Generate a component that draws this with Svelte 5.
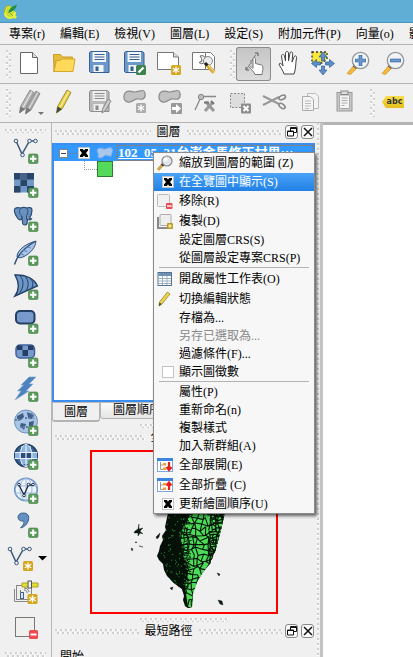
<script>
  const menus = ['專案(r)', '編輯(E)', '檢視(V)', '圖層(L)', '設定(S)', '附加元件(P)', '向量(o)', '影像(R)'];
  const fileTools = [
    ['new', '新增專案'], ['open', '開啟專案'], ['save', '儲存'], ['saveas', '另存新檔'],
    ['composer', '新增列印版面'], ['manager', '版面管理員']
  ];
  const viewTools = [
    ['touch', '觸控縮放'], ['hand', '平移'], ['pan', '平移至選取'], ['zoomin', '放大'], ['zoomout', '縮小']
  ];
  const editTools = [
    ['pencils', '目前編輯'], ['pencil', '切換編輯'], ['saveedit', '儲存編輯'], ['addshape', '新增圖徵'],
    ['moveshape', '移動圖徵'], ['node', '節點工具'], ['delsel', '刪除選取'], ['cut', '剪下'], ['copy', '複製'], ['paste', '貼上']
  ];
  const layerTools = [
    ['vector', '加入向量圖層'], ['raster', '加入網格圖層'], ['postgis', '加入 PostGIS'], ['spatialite', '加入 SpatiaLite'],
    ['mssql', '加入 MSSQL'], ['oracle', '加入 Oracle'], ['oraraster', '加入 Oracle 網格'], ['sqlany', '加入 SQL Anywhere'],
    ['wms', '加入 WMS'], ['wcs', '加入 WCS'], ['wfs', '加入 WFS'], ['csv', '加入文字圖層'],
    ['newvector', '新增圖層'], ['gps', 'GPS 工具'], ['remove', '移除圖層']
  ];
  const context = [
    { t: '縮放到圖層的範圍 (Z)', icon: 'm-zoom' },
    { t: '在全覽圖中顯示(S)', check: true, on: true, hot: true },
    { t: '移除(R)', icon: 'm-remove' },
    { t: '複製(D)', icon: 'm-copy' },
    { t: '設定圖層CRS(S)' },
    { t: '從圖層設定專案CRS(P)' },
    { sep: true },
    { t: '開啟屬性工作表(O)', icon: 'm-table' },
    { t: '切換編輯狀態', icon: 'm-pencil' },
    { t: '存檔為...' },
    { t: '另存已選取為...', off: true },
    { t: '過濾條件(F)...' },
    { t: '顯示圖徵數', check: true, on: false },
    { sep: true },
    { t: '屬性(P)' },
    { t: '重新命名(n)' },
    { t: '複製樣式' },
    { t: '加入新群組(A)' },
    { t: '全部展開(E)', icon: 'm-down' },
    { t: '全部折疊 (C)', icon: 'm-up' },
    { t: '更新繪圖順序(U)', check: true, on: true }
  ];

  // Village boundaries on the overview map: a jittered mesh of small cells.
  let seed = 17;
  const rnd = () => (seed = (seed * 16807) % 2147483647) / 2147483647;
  function mesh(x0, y0, x1, y1, step, jitter) {
    const cols = Math.ceil((x1 - x0) / step), rows = Math.ceil((y1 - y0) / step);
    const p = Array.from({ length: rows + 1 }, (_, r) => Array.from({ length: cols + 1 }, (_, c) =>
      [(x0 + c * step + (rnd() - 0.5) * jitter).toFixed(1), (y0 + r * step + (rnd() - 0.5) * jitter).toFixed(1)]));
    let d = '';
    for (let r = 0; r < rows; r++) for (let c = 0; c < cols; c++) {
      if (rnd() < 0.85) d += `M${p[r][c]}L${p[r][c + 1]}`;
      if (rnd() < 0.85) d += `M${p[r][c]}L${p[r + 1][c]}`;
    }
    return d;
  }
  const wide = mesh(172, 500, 228, 612, 5, 5);
  const fine = mesh(172, 500, 190, 590, 3, 3);
  const coast = mesh(210, 500, 228, 575, 3, 3);
  const specks = Array.from({ length: 150 }, () => [156 + rnd() * 36, 505 + rnd() * 82]);
</script>

{#snippet plus()}
  <rect x="16.500" y="21" width="9.500" height="9.500" rx="1.500" fill="#5c9a5e" stroke="#3f7d45" stroke-width=".6" />
  <path d="M21.200 22.500v6.500M18 25.800h6.500" stroke="#fff" stroke-width="2" />
{/snippet}

{#snippet star(x, y, fill)}
  <rect {x} {y} width="10" height="10" rx="1.500" {fill} />
  <path d="M{x + 5} {y + 1.5}v7M{x + 1.8} {y + 3.2}l6.400 3.600M{x + 1.8} {y + 6.8}l6.400-3.600" stroke="#fff" stroke-width="1.300" />
{/snippet}

{#snippet disk(body, edge, label)}
  <path d="M8.500 4.500h17l1.500 1.500v19.500h-18.500l-1-1V5.500z" fill={body} stroke={edge} />
  <rect x="10.500" y="5" width="13.500" height="10" fill={label} />
  <path d="M12.500 7.500h10M12.500 10h10M12.500 12.500h10" stroke={edge} />
  <rect x="11.500" y="18" width="10" height="7" fill={label} />
  <rect x="13.500" y="19.500" width="3" height="4.500" fill={edge} />
{/snippet}

{#snippet pen(x, y, body, edge, tip)}
  <g transform="translate({x} {y})">
    <path d="M11 0l4 2.500L6 19l-5.500 4 1-6.500z" fill={body} stroke={edge} stroke-width=".8" />
    <path d="M12.800 1.500L4 17.500" stroke="#fff" stroke-opacity=".6" stroke-width="1.200" />
    <path d="M1.500 16.500L6 19 .5 23z" fill={tip} />
  </g>
{/snippet}

{#snippet lens(minus)}
  <path d="M14 17l3 3-7.500 7.500-3.500-1z" fill="#f3b83c" stroke="#c48b1c" stroke-width=".6" />
  <path d="M13.500 20.500l3-3.500" stroke="#222" stroke-width="4" />
  <circle cx="19.500" cy="13.500" r="8.200" fill="#f1f3f5" stroke="#8f959b" stroke-width="1.300" />
  <path d={minus ? 'M14 13.500h11' : 'M14 13.500h11M19.500 8v11'} stroke="#3e6da8" stroke-width="3.600" />
  <path d={minus ? 'M14.500 13.500h10' : 'M14.500 13.500h10M19.500 8.500v10'} stroke="#6d9bd1" stroke-width="2" />
{/snippet}

{#snippet blob()}
  <path d="M8 7c3-4 6-1 10-1s9-4 10 1-2 7-6 6-5 2-9 3-8-3-5-9z" fill="#c2c2c2" stroke="#8a8a8a" stroke-width="1.200" />
{/snippet}

{#snippet vee(dx)}
  <g transform="translate({dx} 0)" fill="#eef2f7" stroke="#3e587a">
    <path d="M4 8l6 13L17.500 8H23" fill="none" stroke-width="1.500" />
    <circle cx="4" cy="8" r="1.800" /><circle cx="10.500" cy="22" r="1.800" />
    <circle cx="17.500" cy="8" r="1.800" /><circle cx="23.500" cy="8" r="1.800" />
  </g>
{/snippet}

{#snippet art(n)}
  {#if n === 'new'}
    <path d="M8.500 5.500h12l5 5v16h-17z" fill="#fff" stroke="#666" /><path d="M20.500 5.500v5h5" fill="#ddd" stroke="#666" />
  {:else if n === 'open'}
    <path d="M6.500 7.500h7l2 2.500h10v4h-17l-1.500 11z" fill="#e8bd3d" stroke="#cc9d25" />
    <path d="M9.500 13.500h4l1.500-1.500h13l-2 12.500H7z" fill="#ffd95a" stroke="#d6a72f" />
  {:else if n === 'save'}
    {@render disk('#6b97ca', '#365f92', '#f3f5f7')}
  {:else if n === 'saveas'}
    {@render disk('#6b97ca', '#365f92', '#f3f5f7')}
    <rect x="19" y="18" width="10" height="10" rx="1.500" fill="#3f8250" /><path d="M21.500 25.500l5-5" stroke="#fff" stroke-width="2.200" />
  {:else if n === 'composer'}
    <path d="M5.500 5.500h16l5 4.500v12.500h-21z" fill="#fff" stroke="#777" /><path d="M21.500 5.500V10h5" fill="#ddd" stroke="#777" />
    {@render star(19, 18, '#d3a820')}
  {:else if n === 'manager'}
    <path d="M5.500 5.500h13v17h-13z" fill="#fff" stroke="#777" />
    <path d="M18.500 5.500h5l4 4v13h-9z" fill="#fff" stroke="#777" />
    <path d="M13 9a4 4 0 1 1-1 6.500l3-1.500-.5-2.500z" fill="#eee" stroke="#666" />
    <circle cx="21" cy="14" r="4.500" fill="#e8ecee" stroke="#888" />
    <path d="M18 16l3 3" stroke="#222" stroke-width="3" /><path d="M20.500 18.500l6.500 7" stroke="#d9ab3b" stroke-width="4" /><path d="M21 18l7 7.500" stroke="#f7e19a" />
  {:else if n === 'touch'}
    <path d="M10.500 22.500L21 6" stroke="#777" stroke-dasharray="7 3" /><path d="M10 20v3h3M19 6h3v3" fill="none" stroke="#555" />
    <path d="M18 10.500c1.500 0 1.500 1 1.500 2v4l6 1.500c2 1 1.500 4 .5 9.500h-7c-1-3-4-5-5.500-7 1-1.500 2.500 0 3.500 1v-9c0-1 0-2 1-2z" fill="#fff" stroke="#777" />
    <path d="M15 13v4" stroke="#777" />
  {:else if n === 'hand'}
    <path d="M13 27c-1-4-4-7-5-10 1.500-1.500 3 0 4 2L10.500 9c0-2 2.500-2 3 0l1 5V6c0-2 3-2 3 0v8l1.500-8c.5-2 3-1 2.700.7L21 15l2-5c1-2 3-1 2.500 1-1 5-.5 11-2.500 16z" fill="#fff" stroke="#444" />
  {:else if n === 'pan'}
    <path d="M6 5h15v7l-5 4H6z" fill="#f9e53b" stroke="#333" stroke-width="1.300" stroke-dasharray="2 2" />
    <g fill="#5c8fca" stroke="#345f96" stroke-width=".7">
      <path d="M17 5l4 5h-2.500v4h-3v-4H13z" /><path d="M17 28l4-5h-2.500v-4h-3v4H13z" />
      <path d="M5.500 16.500l5-4V15h4v3h-4v2.500z" /><path d="M28.500 16.500l-5-4V15h-4v3h4v2.500z" />
    </g>
  {:else if n === 'zoomin'}
    {@render lens(false)}
  {:else if n === 'zoomout'}
    {@render lens(true)}
  {:else if n === 'pencils'}
    {@render pen(7, 4, '#b5b5b5', '#808080', '#777')}{@render pen(13, 5, '#a9a9a9', '#808080', '#777')}
    <path d="M26 26h6l-3 3z" fill="#777" />
  {:else if n === 'pencil'}
    {@render pen(9, 4, '#ead23c', '#8b7a22', '#444')}
  {:else if n === 'saveedit'}
    {@render disk('#b9b9b9', '#8c8c8c', '#eee')}
    <path d="M26 13l3 2-6 10-3 2 .5-4z" fill="#ccc" stroke="#888" />
  {:else if n === 'addshape'}
    {@render blob()}{@render star(19, 17, '#ababab')}
  {:else if n === 'moveshape'}
    {@render blob()}
    <rect x="19" y="17" width="11" height="11" rx="1" fill="#999" /><path d="M20 21h4v-3l5 4.500-5 4.500v-3h-4z" fill="#fff" />
  {:else if n === 'node'}
    <path d="M8 24l6-13M15 10.500h14" stroke="#888" stroke-width="1.300" /><circle cx="14" cy="11" r="2.700" fill="#bbb" stroke="#888" />
    <path d="M18 25l8-9M19 16l8 9" stroke="#999" stroke-width="3" /><path d="M17 16.500h5M24 15l3 3" stroke="#777" stroke-width="2" />
  {:else if n === 'delsel'}
    <rect x="8.500" y="7.500" width="14" height="14" fill="#ddd" stroke="#888" stroke-dasharray="2 1.500" />
    <rect x="19" y="17.500" width="10" height="10" rx="1" fill="#8e8e8e" /><path d="M21.500 20l5 5M26.500 20l-5 5" stroke="#fff" stroke-width="2" />
  {:else if n === 'cut'}
    <path d="M6 10l16 8M6 19l16-8" stroke="#999" stroke-width="2" />
    <ellipse cx="25" cy="11.500" rx="3.500" ry="2" transform="rotate(-25 25 11)" fill="none" stroke="#888" stroke-width="1.600" />
    <ellipse cx="25" cy="20" rx="3.500" ry="2" transform="rotate(35 25 20)" fill="none" stroke="#888" stroke-width="1.600" />
  {:else if n === 'copy'}
    <path d="M15.500 7.500h8l3 3v12h-11z" fill="#f4f4f4" stroke="#bbb" /><path d="M10.500 10.500h8l3 3v11h-11z" fill="#f4f4f4" stroke="#aaa" />
    <path d="M13 15h6M13 17.500h6M13 20h6M13 22.500h4" stroke="#bbb" />
  {:else if n === 'paste'}
    <rect x="10" y="6.500" width="15" height="18.500" fill="#c9c9c9" stroke="#999" /><path d="M12.500 9h10v13.500h-10z" fill="#f5f5f5" stroke="#aaa" />
    <rect x="14" y="5" width="7" height="3.500" fill="#ddd" stroke="#888" /><path d="M14.500 12h6M14.500 14.500h6M14.500 17h6M14.500 19.500h3" stroke="#aaa" />
  {/if}
{/snippet}

{#snippet layerArt(n)}
  {#if n === 'vector'}
    {@render vee(0)}
  {:else if n === 'raster'}
    <rect x="2" y="6" width="20" height="19.500" fill="#7099c8" />
    <path d="M2 6h6.500v6.500H2zM15 6h7v6.500h-7zM8.500 12.500H15V19H8.500zM2 19h6.500v6.500H2zM15 19h7v6.500h-7z" fill="#294568" />
    <path d="M8.500 6H15v6.500H8.500z" fill="#45638a" />
  {:else if n === 'postgis'}
    <path d="M3 7.500C5 6 7 6.500 8.500 7c2-.8 4.500-.8 6.500 0 2-1 5-.5 5 2 0 3-1 6-2.500 8l2 .8c-1 1.200-2.500 1.200-4 .7l-.5 4c-.5 2-4 2-4.300 0L10 17c-1 2.500-3 2.500-4.500 0C3.500 14 1.500 9.500 3 7.500z" fill="#6991bf" stroke="#2e4d73" stroke-width="1.200" />
    <path d="M8.500 7.500C7 10 7 13 9.500 14.500L10 17M15 7.500c1.500 3 1 5-.5 7v4" fill="none" stroke="#2e4d73" />
  {:else if n === 'spatialite'}
    <path d="M5 22c0-5 5-12 19-16-.5 6-5 12-12 15.500-3 1.500-5 1.500-7 .5z" fill="#a9c6e8" stroke="#2f4f78" />
    <path d="M2.500 29.500C5 21 12 13 23 6.500" stroke="#2f4f78" stroke-width="1.400" fill="none" />
    <path d="M8 19l4 1M11 15.500l4.500 1M15 12l4 1" stroke="#5f86b5" fill="none" />
  {:else if n === 'mssql'}
    <path d="M3 6c10-.5 19 3 22.500 11L3 27c5-7 4-14 0-21z" fill="#6d96c7" stroke="#223f66" stroke-width="1.400" />
    <path d="M8 6.500c4 5 4 11 0 17M13 7c4 5 4 10 1 15M18 9c3 3 4 7 1 11" stroke="#223f66" fill="none" />
  {:else if n === 'oracle'}
    <rect x="4" y="8" width="18.500" height="12.500" rx="4" fill="#7899cc" stroke="#243e64" stroke-width="2" />
  {:else if n === 'oraraster'}
    <rect x="4" y="8" width="18.500" height="13" rx="4" fill="#7899cc" stroke="#3e619b" stroke-width="1.500" />
    <path d="M5 8.500h5.500V13H5zM16 8.500h5.500V13H16zM10.500 13H16v6h-5.500z" fill="#243e64" />
  {:else if n === 'sqlany'}
    <path d="M17 6h7l-7 7h4l-7 7h3L3 29l6-9H5.500l6-6H9z" fill="#4c83bf" stroke="#7fa6d3" stroke-width=".6" />
  {:else if n === 'wms'}
    <circle cx="14" cy="16.500" r="11.500" fill="#a9c4e4" stroke="#6f92bd" />
    <path d="M5 11l6-3 1 4-3 3-4-1zM15 7l7 3-2 4-4-1zM9 18l5 1-2 6-4-4zM17 17l5-1-1 5-4 2z" fill="#3f5d86" />
    <path d="M3 15h5M13 13h6M19 8l3 6M8 22h9" stroke="#627fa5" stroke-width="2" stroke-dasharray="2 1" />
  {:else if n === 'wcs'}
    <circle cx="14" cy="16.500" r="11.300" fill="#3c628f" stroke="#223f66" stroke-width="1.500" />
    <path d="M9 7h10v18H9zM3 14h22v5H3z" fill="#8cb4dd" /><path d="M9 14h10v5H9z" fill="#2b4d79" />
    <path d="M3 13.500h22M3 19.500h22M14 5v23" stroke="#e7f0f9" stroke-width="1.200" /><ellipse cx="14" cy="16.500" rx="6" ry="11" fill="none" stroke="#e7f0f9" />
  {:else if n === 'wfs'}
    <circle cx="14" cy="16.500" r="11.300" fill="#edf4fb" stroke="#7197c6" stroke-width="1.600" />
    <path d="M3 13h22M3 20h22M14 5v23" stroke="#9bbade" /><ellipse cx="14" cy="16.500" rx="6" ry="11" fill="none" stroke="#9bbade" />
    <path d="M7 12l5 10 4.500-10H21" fill="none" stroke="#1e2c40" stroke-width="1.300" />
    <g fill="#fff" stroke="#1e2c40"><circle cx="7" cy="11.500" r="1.300" /><circle cx="12" cy="22.500" r="1.300" /><circle cx="16.500" cy="11.500" r="1.300" /><circle cx="21" cy="11.500" r="1.300" /></g>
  {:else if n === 'csv'}
    <path d="M6 10c0-3 3-4 5.500-4 4 0 6 3 5 7-1 4-4 7-8 8 3-3 4-5 3-7-3 .5-5.500-1-5.500-4z" fill="#6590c2" stroke="#37618f" />
  {:else if n === 'newvector'}
    {@render vee(-6)}{@render star(11, 20, '#d3a820')}
    <path d="M26 15h9l-4.500 4.500z" fill="#000" />
  {:else if n === 'gps'}
    <path d="M2.500 14v12.500h14" fill="none" stroke="#888" /><rect x="4.500" y="10.500" width="15" height="14" fill="#eee" stroke="#888" />
    <path d="M10 8h16v4H10z" fill="#e4e02f" stroke="#aaa32a" /><rect x="16" y="6" width="3.500" height="7" fill="#eee" stroke="#555" />
    <rect x="8.500" y="17.500" width="3" height="6" fill="#dbe7f4" stroke="#3c628f" /><path d="M8.500 15v3M12 15c2 0 3 1 3 3M12 13c3 0 5 2 5 4" fill="none" stroke="#777" />
    {@render star(15.500, 19, '#d3a820')}
  {:else if n === 'remove'}
    <rect x="3.500" y="8.500" width="19" height="19" fill="#f0f0ef" stroke="#777" />
    <rect x="17" y="21" width="9" height="9" rx="1.500" fill="#ee4b50" /><path d="M18.500 25.500h6" stroke="#fff" stroke-width="2" />
  {/if}
  {#if !['newvector', 'gps', 'remove'].includes(n)}{@render plus()}{/if}
{/snippet}

{#snippet menuArt(n)}
  {#if n === 'm-zoom'}
    <path d="M1 15l5-6" stroke="#cda84b" stroke-width="3" /><path d="M5 10.500l2-2" stroke="#333" stroke-width="3" /><circle cx="10" cy="6" r="5" fill="#dfe5e8" stroke="#888" stroke-width="1.200" />
    <circle cx="8.500" cy="4.500" r="2" fill="#fff" />
  {:else if n === 'm-remove'}
    <rect x=".5" y="1.500" width="12" height="12" rx="1" fill="#f1f1f1" stroke="#bbb" /><rect x="9" y="10" width="6.500" height="6" rx="1" fill="#ee4b50" /><path d="M10 13h4.500" stroke="#fff" stroke-width="1.500" />
  {:else if n === 'm-copy'}
    <path d="M1 4v11h11" fill="none" stroke="#888" stroke-width="2" /><rect x="3" y="1.500" width="11" height="11" rx="1" fill="#eee" stroke="#aaa" />
    <rect x="10" y="10" width="6" height="6" rx="1" fill="#b79a2c" /><rect x="11.500" y="11.500" width="3" height="3" fill="#f6e88a" />
  {:else if n === 'm-table'}
    <rect x="1" y="1.500" width="13.500" height="13" fill="#fff" stroke="#57738f" /><rect x="1.500" y="2" width="12.500" height="3" fill="#6f91b3" />
    <path d="M1 7.500h13M1 10h13M1 12.500h13M5.500 5v9M10 5v9" stroke="#9cb0c4" />
  {:else if n === 'm-pencil'}
    <path d="M10.500 1L13 3 5 13l-3 2 .5-4z" fill="#ecd44a" stroke="#95842d" stroke-width=".8" /><path d="M2.500 11.500L4.500 13 2 15z" fill="#333" />
  {:else}
    <rect x=".5" y="1.500" width="15" height="13" fill="#fff" stroke="#7da7df" /><path d="M0 1h16v3H0z" fill="#3f83e0" />
    <path d="M3.500 5v7.500H6M3.500 8H6" fill="none" stroke="#999" /><path d="M6 6h3v2.500H6zM6 10.500h3V13H6z" fill="#f0a030" />
    <path d={n === 'm-down' ? 'M12 5v8M9.500 10l2.500 3 2.500-3' : 'M12 13V5M9.500 8.500L12 5.500l2.500 3'} fill="none" stroke="#e81e1e" stroke-width="2.200" />
  {/if}
{/snippet}

{#snippet toolbar(list)}
  {#each list as [n, label]}
    <button class="tool" class:pressed={n === 'touch'} aria-label={label} title={label}>
      <svg width="35" height="34" viewBox="0 0 35 34">{@render art(n)}</svg>
    </button>
  {/each}
{/snippet}

{#snippet dockTitle(text)}
  <div class="dock-title">
    <span class="grip"></span><span>{text}</span><span class="grip"></span>
    <button class="mini" aria-label="浮動"><svg width="12" height="12" viewBox="0 0 12 12"><path d="M4.500 5V1.500h6v5H8M1.500 5h6v5h-6zM4 2.500h7M1 5.500h7" fill="none" stroke="#111" /></svg></button>
    <button class="mini" aria-label="關閉"><svg width="12" height="12" viewBox="0 0 12 12"><path d="M2 2l8 8M10 2l-8 8" stroke="#111" stroke-width="1.500" /></svg></button>
  </div>
{/snippet}

<div class="app">
  <header class="titlebar">
    <svg width="14" height="16" viewBox="0 0 14 16">
      <path d="M6 2C3 2 1 5 1 8.500S3 14 6 14s5-2 5-6" fill="#c9dc3a" stroke="#e6f23a" stroke-width="2" />
      <path d="M6 1.500c-3 0-5.500 3-5.500 7" fill="none" stroke="#8ea51b" /><path d="M4 9c1-4 4-7 9-8.500C12 5 9 7.500 6 8z" fill="#1f8f3c" />
      <path d="M8 10l4 4" stroke="#e6f23a" stroke-width="3" /><path d="M5 8l4 4" stroke="#8ea51b" />
    </svg>
  </header>

  <nav class="menubar">{#each menus as m}<button>{m}</button>{/each}</nav>

  <div class="toolbar">
    <span class="vgrip"></span>{@render toolbar(fileTools)}
    <span class="vgrip next"></span>{@render toolbar(viewTools)}
  </div>
  <div class="toolbar">
    <span class="vgrip"></span>{@render toolbar(editTools)}
    <span class="vgrip next"></span>
    <button class="tool" aria-label="標籤">
      <span class="tag">abc</span>
    </button>
  </div>

  <main>
    <aside class="side">
      <span class="grip"></span>
      {#each layerTools as [n, label]}
        <button aria-label={label} title={label}><svg width="28" height="34" viewBox="0 0 28 34">{@render layerArt(n)}</svg></button>
      {/each}
      <span class="grip last"></span>
    </aside>

    <section class="docks">
      {@render dockTitle('圖層')}
      <div class="tree">
        <div class="node">
          <button class="expander" aria-label="折疊"></button>
          <span class="dots"></span>
          <input type="checkbox" checked aria-label="顯示圖層" />
          <svg width="16" height="12" viewBox="0 0 16 12"><path d="M1 2c3-2 5 1 8 0s5-2 6 0-1 6-1 7-3-1-5-1-3 3-6 3-1-3-2-5-1-3 0-4z" fill="#a8c7ea" stroke="#8fb4e0" /></svg>
          <span class="name">102_05_21台澎金馬修正村里⋯</span>
        </div>
        <div class="legend"><span class="elbow"></span><span class="swatch"></span></div>
      </div>
      <div class="tabs">
        <button class="tab active">圖層</button><button class="tab">圖層順序</button>
      </div>
      <span class="grip split"></span>
      {@render dockTitle('全覽圖')}
      <div class="overview">
        <svg width="188" height="164" viewBox="90 451 188 164">
          <defs>
            <clipPath id="island"><path d="M160 490L168 514 165 528 162 537 160 547 157 557 163 565 167 577 175 585 182 590 184 597 185 607 188 609 192 608 193 595 197 583 203 573 210 565 215 553 220 535 224 518 227 490z" /></clipPath>
          </defs>
          <path d="M160 490l8 24-3 14 1 3-4 6 1 4-3 6-1 5-2 5 2 4 4 4 1 6 3 6 8 8 7 5 2 7-1 4 2 6 3 2 4-1 1-13 1-7 3-5 6-10 7-8 2-7 3-5 5-18 4-17 3-28z" fill="#061008" />
          <g clip-path="url(#island)">
            <path d="M196 490h32l-8 50-12 26-11 18-4 24h-5l-3-20 3-14-5-20-3-20 11-20z" fill="#4bdb56" />
            <path d={wide} stroke="#07140a" stroke-width="1.100" />
            <path d={fine} stroke="#07140a" />
            <path d={coast} stroke="#07140a" stroke-width="1.200" />
            {#each specks as [x, y]}<rect {x} {y} width="1" height="1" fill="#2c8f3a" />{/each}
          </g>
          <path d="M135 532l3-2 1-5v5l4-1-3 3 3 3-3-1-2 3v-3l-4 0zM135 543l2 0-1 1zM139 547l4 1zM131 549l2 1-1 2zM156 538l4-4-1 4-2 2zM170 589l3-1-1 3zM217 574l3 1-1 2zM218 601l4 1 1 4-3-1z" fill="#0d1a10" stroke="#0d1a10" stroke-width=".4" />
          <rect x="91" y="452" width="186" height="162" fill="none" stroke="#f00" stroke-width="2" />
        </svg>
      </div>
      <span class="grip split"></span>
      {@render dockTitle('最短路徑')}
      <div class="start">開始</div>
    </section>
    <span class="splitter"></span>
    <section class="canvas" aria-label="地圖"></section>
  </main>

  <div class="context" role="menu">
    {#each context as c}
      {#if c.sep}
        <hr />
      {:else if c.check}
        <label class="row" class:hot={c.hot}><span class="slot right"><input type="checkbox" checked={c.on} /></span>{c.t}</label>
      {:else}
        <button class="row" class:tall={c.icon} role="menuitem" disabled={c.off}>
          <span class="slot">{#if c.icon}<svg width="16" height="17" viewBox="0 0 16 17">{@render menuArt(c.icon)}</svg>{/if}</span>{c.t}
        </button>
      {/if}
    {/each}
  </div>
</div>

<style>
  :global(body) { margin: 0; }
  .app {
    position: relative;
    display: flex;
    flex-direction: column;
    height: 100vh;
    overflow: hidden;
    background: #f0f0f0;
    color: #000;
    font: 12px/18px "Liberation Serif", "Noto Sans CJK TC", serif;
    white-space: nowrap;
  }
  .app * { box-sizing: border-box; }
  button { margin: 0; padding: 0; border: 0; background: none; color: inherit; font: inherit; }
  svg { display: block; overflow: visible; }

  .titlebar { flex: none; height: 23px; padding: 4px 4px 0; background: #60aed6; border-bottom: 1px solid #4996bd; }
  .menubar { flex: none; display: flex; gap: 15px; height: 22px; padding-left: 9px; overflow: hidden; border-bottom: 1px solid #b4b4b4; }
  .menubar button { flex: none; }

  .toolbar { flex: none; display: flex; align-items: center; height: 39px; padding: 2px 0 2px 6px; overflow: hidden; border-bottom: 1px solid #b4b4b4; }
  .tool { flex: none; width: 35px; height: 34px; }
  .pressed { border-radius: 3px; background: linear-gradient(#c4c4c4, #dcdcdc); box-shadow: inset 0 0 0 1px #8c8c8c; }
  .tag {
    display: block; width: 22px; height: 12px; margin: -2px 0 0 6px; padding-left: 3px;
    clip-path: polygon(0 50%, 4px 0, 100% 0, 100% 100%, 4px 100%);
    background: linear-gradient(#f8de4c, #e4bf1c);
    font: bold 8px/11px "DejaVu Sans", sans-serif; color: #333; text-align: center;
  }

  .grip {
    height: 5px;
    background:
      linear-gradient(90deg, #cfcfcf 2px, #fff 2px 3px, transparent 3px) 0 0 / 5px 2px repeat-x,
      linear-gradient(90deg, #cfcfcf 2px, #fff 2px 3px, transparent 3px) 2px 3px / 5px 2px repeat-x;
  }
  .vgrip {
    flex: none; width: 6px; height: 28px;
    background:
      linear-gradient(#cfcfcf 2px, #fff 2px 3px, transparent 3px) 0 0 / 2px 6px repeat-y,
      linear-gradient(#cfcfcf 2px, #fff 2px 3px, transparent 3px) 3px 3px / 2px 6px repeat-y;
  }
  .vgrip.next { margin-left: 8px; }

  main { flex: 1; display: flex; min-height: 0; }
  .side { flex: none; display: flex; flex-direction: column; width: 52px; padding: 6px 5px 0; overflow: hidden; border-right: 1px solid #b8b8b8; }
  .side .grip { flex: none; height: 4px; }
  .side .last { height: 5px; margin-top: 9px; }
  .side button { flex: none; height: 34px; padding-left: 7px; }

  .docks { flex: none; display: flex; flex-direction: column; width: 263px; overflow: hidden; }
  .dock-title { flex: none; display: flex; align-items: center; gap: 3px; height: 20px; padding: 0 1px 2px 3px; }
  .dock-title .grip { flex: 1; margin-right: 3px; }
  .dock-title span + .grip { margin: 0 0 0 3px; }
  .mini { display: grid; place-items: center; width: 13px; height: 14px; border: 1px solid #888; border-radius: 3px; background: #fafafa; }

  .tree { flex: none; height: 259px; border: 2px solid #3a8ef0; background: #fff; }
  .node { display: flex; align-items: center; height: 16px; background: #3399ff; overflow: hidden; padding-left: 5px; }
  .expander { width: 9px; height: 9px; border: 1px solid #848484; background: linear-gradient(#444, #444) center / 5px 1px no-repeat #fff; }
  .dots { width: 9px; margin-right: 1px; border-top: 1px dotted #777; }
  .node svg { margin: 0 4px 0 7px; }
  .name { flex: 1; overflow: hidden; padding-left: 1px; outline: 1px dotted #c86a1a; outline-offset: -1px; color: #fff; font-size: 13px; font-weight: bold; line-height: 16px; text-decoration: underline; }
  .legend { display: flex; padding-left: 30px; }
  .elbow { width: 13px; height: 9px; border: dotted #999; border-width: 0 0 1px 1px; }
  .swatch { width: 16px; height: 16px; border: 1px solid #2d7c32; background: #55d95a; }

  input { appearance: none; display: grid; place-items: center; flex: none; width: 12px; height: 12px; margin: 0; border: 1px solid #c4c4c4; background: #fff; }
  input:checked::before {
    content: ""; width: 8px; height: 8px; background: #000;
    clip-path: polygon(0 0, 35% 0, 50% 20%, 65% 0, 100% 0, 100% 20%, 75% 50%, 100% 80%, 100% 100%, 65% 100%, 50% 80%, 35% 100%, 0 100%, 0 80%, 25% 50%, 0 20%);
  }

  .tabs { flex: none; display: flex; align-items: flex-start; height: 22px; border-top: 1px solid #bbb; }
  .tab { height: 16px; padding: 0 12px; border: 1px solid #b4b4b4; border-top: 0; border-radius: 0 0 3px 3px; background: linear-gradient(#f8f8f8, #e6e6e6); line-height: 15px; }
  .tab.active { height: 19px; padding: 0 11px; border-width: 0 1px 2px; background: #f0f0f0; line-height: 18px; }

  .split { flex: none; align-self: center; width: 88px; height: 4px; }
  .overview { flex: none; display: flex; justify-content: center; padding: 2px 0 4px; }
  .start { padding: 6px 8px 0; }
  .splitter {
    flex: none; width: 8px; border-right: 3px solid #c4c4c4;
    background: linear-gradient(#cfcfcf 2px, #fff 2px 3px, transparent 3px) 2px 0 / 2px 5px repeat-y;
  }
  .canvas { flex: 1; border-top: 2px solid #b4b4b4; background: #fff; }

  .context { position: absolute; left: 153px; top: 152px; width: 162px; border: 1px solid #8a8a8a; background: #f7f7f7; box-shadow: 2px 2px 3px #0009; }
  .row { display: flex; align-items: center; width: 100%; height: 18px; padding-left: 3px; text-align: left; }
  .tall { height: 20px; }
  .row:disabled { color: #888; }
  .hot { background: linear-gradient(#4aa3f8, #2080e4); color: #fff; }
  .slot { display: flex; flex: none; width: 22px; }
  .right { padding-left: 5px; }
  hr { height: 1px; margin: 0 5px 1px; border: 0; background: #b4b4b4; }
</style>
